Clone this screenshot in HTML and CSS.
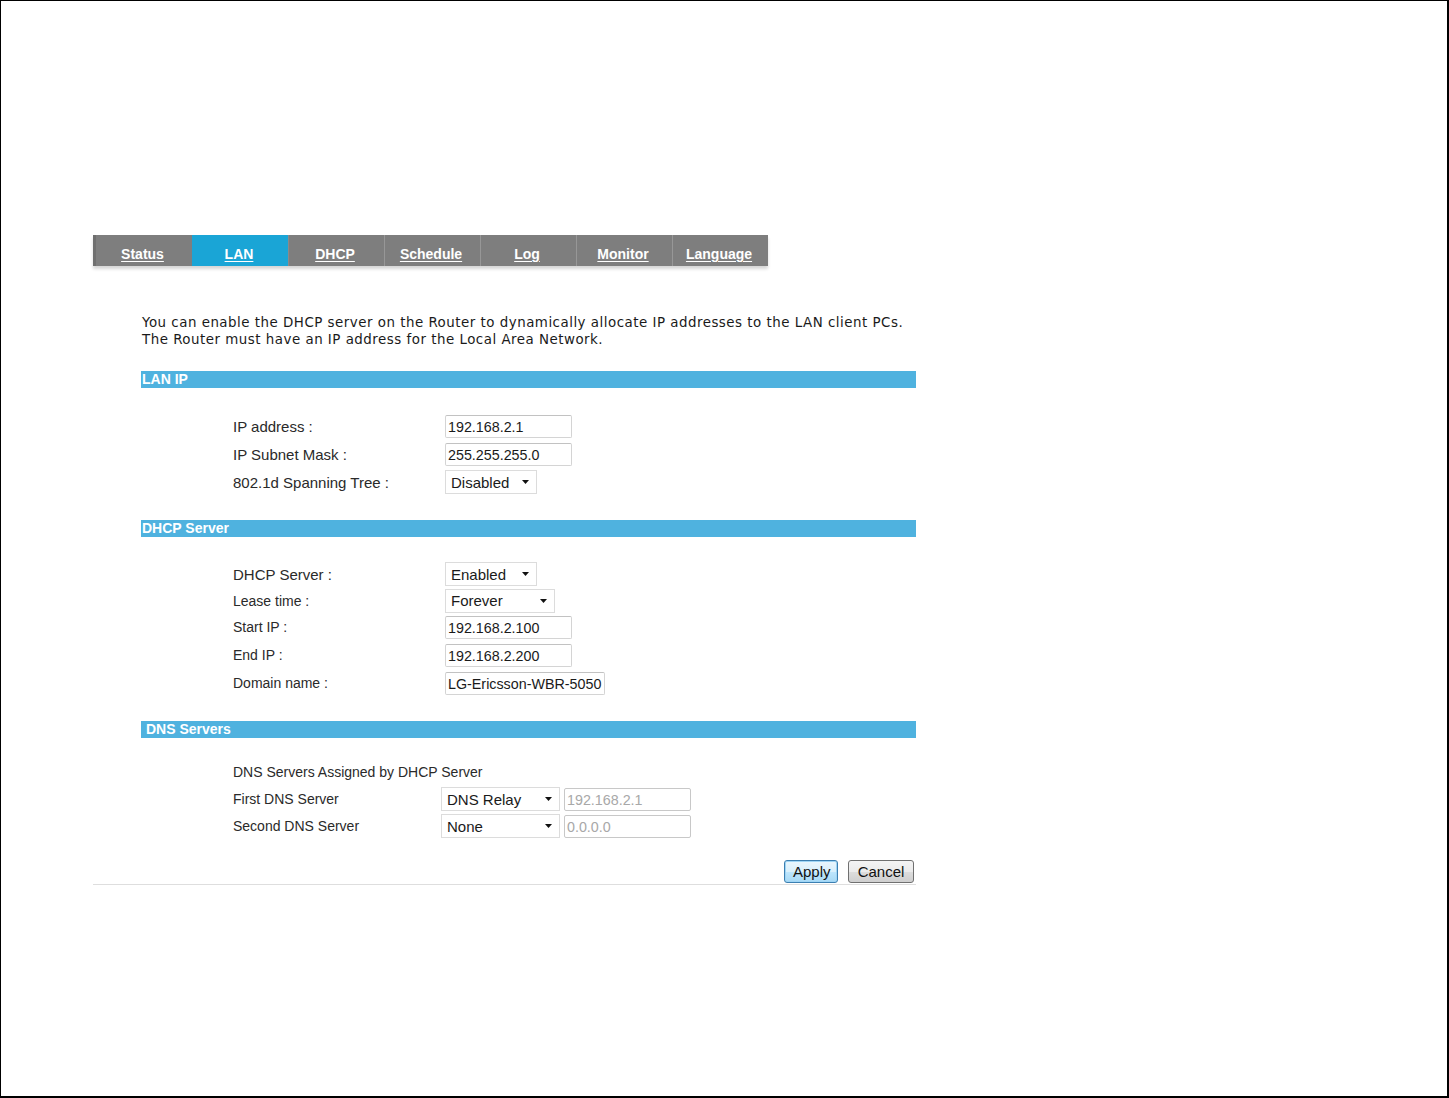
FILE: index.html
```html
<!DOCTYPE html>
<html>
<head>
<meta charset="utf-8">
<title>LAN</title>
<link rel="stylesheet" href="styles.css">
</head>
<body>
<div class="frame">
  <div class="panel">
    <nav class="tabs">
      <a class="tab" href="#">Status</a>
      <a class="tab active" href="#">LAN</a>
      <a class="tab" href="#">DHCP</a>
      <a class="tab" href="#">Schedule</a>
      <a class="tab" href="#">Log</a>
      <a class="tab" href="#">Monitor</a>
      <a class="tab" href="#">Language</a>
    </nav>
    <div class="content">
      <p class="intro">You can enable the DHCP server on the Router to dynamically allocate IP addresses to the LAN client PCs.<br>The Router must have an IP address for the Local Area Network.</p>

      <div class="bar bar-first">LAN IP</div>
      <div class="rows rows-lan">
        <div class="row"><span class="label l15">IP address :</span><div class="input w127">192.168.2.1</div></div>
        <div class="row"><span class="label l15">IP Subnet Mask :</span><div class="input w127">255.255.255.0</div></div>
        <div class="row"><span class="label l15">802.1d Spanning Tree :</span><div class="select w92"><span>Disabled</span><svg class="arrow" width="7" height="4" viewBox="0 0 7 4"><path d="M0 0H7L3.5 4Z"/></svg></div></div>
      </div>

      <div class="bar">DHCP Server</div>
      <div class="rows rows-dhcp">
        <div class="row h28"><span class="label l15">DHCP Server :</span><div class="select w92"><span>Enabled</span><svg class="arrow" width="7" height="4" viewBox="0 0 7 4"><path d="M0 0H7L3.5 4Z"/></svg></div></div>
        <div class="row h25"><span class="label l14">Lease time :</span><div class="select w110"><span>Forever</span><svg class="arrow" width="7" height="4" viewBox="0 0 7 4"><path d="M0 0H7L3.5 4Z"/></svg></div></div>
        <div class="row h28"><span class="label l14">Start IP :</span><div class="input w127">192.168.2.100</div></div>
        <div class="row h28"><span class="label l14">End IP :</span><div class="input w127">192.168.2.200</div></div>
        <div class="row h28"><span class="label l14">Domain name :</span><div class="input w160">LG-Ericsson-WBR-5050</div></div>
      </div>

      <div class="bar bar-dns">DNS Servers</div>
      <div class="rows rows-dns">
        <div class="row h26"><span class="label l14 wide">DNS Servers Assigned by DHCP Server</span></div>
        <div class="row h28"><span class="label l14">First DNS Server</span><div class="dns-ctrl"><div class="select w119"><span>DNS Relay</span><svg class="arrow" width="7" height="4" viewBox="0 0 7 4"><path d="M0 0H7L3.5 4Z"/></svg></div><div class="input w127 disabled">192.168.2.1</div></div></div>
        <div class="row h26"><span class="label l14">Second DNS Server</span><div class="dns-ctrl"><div class="select w119"><span>None</span><svg class="arrow" width="7" height="4" viewBox="0 0 7 4"><path d="M0 0H7L3.5 4Z"/></svg></div><div class="input w127 disabled">0.0.0.0</div></div></div>
      </div>

      <div class="buttons">
        <button class="btn btn-apply">Apply</button>
        <button class="btn">Cancel</button>
      </div>
    </div>
  </div>
</div>
</body>
</html>
```

FILE: styles.css
```css
html, body {
  margin: 0;
  padding: 0;
  background: #ffffff;
}

.frame {
  box-sizing: border-box;
  width: 1449px;
  height: 1098px;
  border-top: 1px solid #000;
  border-left: 1px solid #000;
  border-right: 2px solid #000;
  border-bottom: 2px solid #000;
  background: #fff;
  padding-top: 234px;
  padding-left: 92px;
  font-family: "Liberation Sans", Arial, sans-serif;
  color: #2a2a2a;
}

.panel {
  width: 823px;
  border-bottom: 1px solid #dedede;
}

.tabs {
  display: grid;
  grid-template-columns: repeat(7, 1fr);
  width: 675px;
  height: 31px;
  background: #7e7e7e;
  box-shadow: 0 3px 3px rgba(0, 0, 0, 0.16);
  border-left: 3px solid #6f6f6f;
  box-sizing: border-box;
}

.tab {
  display: flex;
  align-items: center;
  justify-content: center;
  padding-top: 7px;
  padding-right: 3px;
  box-sizing: border-box;
  color: #ffffff;
  font-family: "Liberation Sans", Arial, sans-serif;
  font-weight: bold;
  font-size: 14px;
  text-decoration: underline;
  text-underline-offset: 2px;
  border-left: 1px solid #979797;
}

.tab:first-child {
  border-left: none;
}

.tab.active {
  background: #1aa5d6;
  border-left-color: #1aa5d6;
}

.tab.active + .tab {
  border-left-color: #8a8a8a;
}

.content {
  padding-left: 48px;
}

.intro {
  margin: 48px 0 0 1px;
  font-family: "DejaVu Sans", Verdana, sans-serif;
  font-size: 13.4px;
  letter-spacing: 0.5px;
  line-height: 17px;
  color: #1a1a1a;
  white-space: nowrap;
}

.bar {
  margin-top: 24px;
  height: 17px;
  line-height: 17px;
  background: #4fb2df;
  color: #ffffff;
  font-family: "Liberation Sans", Arial, sans-serif;
  font-weight: bold;
  font-size: 14px;
  padding-left: 1px;
}

.bar-first {
  margin-top: 23px;
}

.bar-dns {
  padding-left: 5px;
}

.rows {
  display: flex;
  flex-direction: column;
  padding-left: 92px;
}

.rows-lan {
  margin-top: 24px;
  margin-bottom: 22px;
}

.rows-dhcp {
  margin-top: 23px;
  margin-bottom: 24px;
}

.rows-dns {
  margin-top: 21px;
}

.row {
  display: flex;
  align-items: center;
  height: 28px;
}

.h25 { height: 25px; }
.h26 { height: 26px; }
.h28 { height: 28px; }

.label {
  width: 212px;
  flex: none;
  color: #2a2a2a;
}

.label.wide {
  width: auto;
}

.l15 { font-size: 15px; }
.l14 { font-size: 14px; }

.input {
  box-sizing: border-box;
  height: 23px;
  line-height: 22px;
  border: 1px solid #d4d4d4;
  border-top-color: #c2c2c2;
  border-radius: 2px;
  padding-left: 2px;
  font-size: 14.3px;
  color: #1a1a1a;
  background: #fff;
  white-space: nowrap;
  overflow: hidden;
}

.input.disabled {
  color: #a8a8a8;
  border-color: #c8c8c8;
}

.select {
  box-sizing: border-box;
  height: 24px;
  border: 1px solid #dcdcdc;
  background: #fff;
  display: flex;
  align-items: center;
  justify-content: space-between;
  padding: 0 7px 0 5px;
  font-size: 15px;
  color: #1a1a1a;
}

.arrow {
  fill: #111;
  flex: none;
}

.w92 { width: 92px; }
.w110 { width: 110px; }
.w119 { width: 119px; }
.w127 { width: 127px; }
.w160 { width: 160px; }

.dns-ctrl {
  display: flex;
  align-items: center;
  gap: 4px;
  margin-left: -4px;
}

.buttons {
  display: flex;
  justify-content: flex-end;
  gap: 10px;
  margin-top: 21px;
  padding-right: 2px;
  padding-bottom: 1px;
}

.btn {
  box-sizing: border-box;
  height: 23px;
  padding: 0 8px;
  font-family: "Liberation Sans", Arial, sans-serif;
  font-size: 15px;
  color: #111;
  border: 1px solid #707070;
  border-radius: 3px;
  background: linear-gradient(#f4f4f4 0%, #ebebeb 50%, #dddddd 51%, #cfcfcf 100%);
  width: 66px;
}

.btn-apply {
  width: 54px;
  border-color: #3c7fb1;
  background: linear-gradient(#eaf6fd 0%, #d9f0fc 50%, #bee6fd 51%, #a7d9f5 100%);
  box-shadow: inset 0 0 0 1px #9fd5f5;
}
```
